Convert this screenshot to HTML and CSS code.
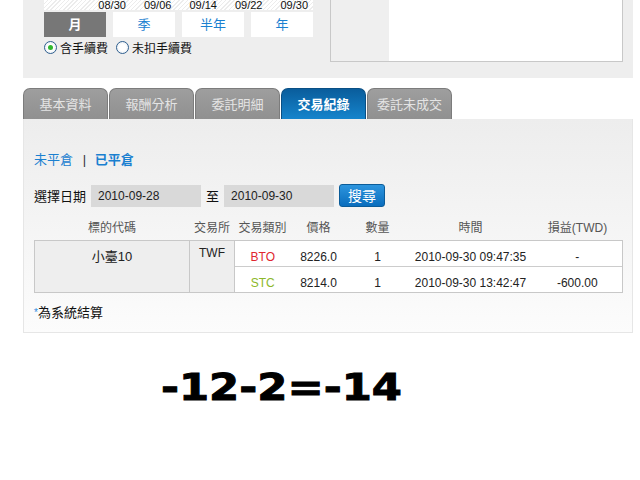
FILE: index.html
```html
<!DOCTYPE html>
<html lang="zh-Hant">
<head>
    <meta charset="UTF-8">
    <title>交易紀錄</title>
    <link rel="stylesheet" href="styles.css">
</head>
<body>
    <div class="page">
        <!-- Period / chart summary -->
        <div class="top-panel">
            <div class="period">
                <div class="axis">
                    <span>08/30</span>
                    <span>09/06</span>
                    <span>09/14</span>
                    <span>09/22</span>
                    <span>09/30</span>
                </div>
                <div class="period-btns">
                    <a class="period-btn active">月</a>
                    <a class="period-btn">季</a>
                    <a class="period-btn">半年</a>
                    <a class="period-btn">年</a>
                </div>
                <div class="fee-opts">
                    <label class="radio checked"><span class="radio-mark"></span>含手續費</label>
                    <label class="radio"><span class="radio-mark"></span>未扣手續費</label>
                </div>
            </div>
            <div class="summary-box">
                <div class="summary-side"></div>
                <div class="summary-main"></div>
            </div>
        </div>

        <!-- Tabs -->
        <ul class="tabs">
            <li class="tab">基本資料</li>
            <li class="tab">報酬分析</li>
            <li class="tab">委託明細</li>
            <li class="tab active">交易紀錄</li>
            <li class="tab">委託未成交</li>
        </ul>

        <div class="tab-panel">
            <div class="sub-nav">
                <a class="sub-link">未平倉</a>
                <span class="sep">|</span>
                <a class="sub-link current">已平倉</a>
            </div>

            <div class="date-row">
                <span class="date-label">選擇日期</span>
                <span class="date-input">2010-09-28</span>
                <span class="date-to">至</span>
                <span class="date-input">2010-09-30</span>
                <button type="button" class="search-btn">搜尋</button>
            </div>

            <table class="trades">
                <colgroup>
                    <col class="w-symbol">
                    <col class="w-exch">
                    <col class="w-type">
                    <col class="w-price">
                    <col class="w-qty">
                    <col class="w-time">
                    <col class="w-pnl">
                </colgroup>
                <thead>
                    <tr>
                        <th>標的代碼</th>
                        <th>交易所</th>
                        <th>交易類別</th>
                        <th>價格</th>
                        <th>數量</th>
                        <th>時間</th>
                        <th>損益(TWD)</th>
                    </tr>
                </thead>
                <tbody>
                    <tr>
                        <td rowspan="2" class="symbol">小臺10</td>
                        <td rowspan="2" class="exch">TWF</td>
                        <td class="buy">BTO</td>
                        <td>8226.0</td>
                        <td>1</td>
                        <td>2010-09-30 09:47:35</td>
                        <td>-</td>
                    </tr>
                    <tr class="second">
                        <td class="sell">STC</td>
                        <td>8214.0</td>
                        <td>1</td>
                        <td>2010-09-30 13:42:47</td>
                        <td>-600.00</td>
                    </tr>
                </tbody>
            </table>

            <p class="note"><span class="star">*</span>為系統結算</p>
        </div>
    </div>

    <div class="formula">-12-2=-14</div>
</body>
</html>
```

FILE: styles.css
```css
/* General Styles */
body {
    margin: 0;
    background: #ffffff;
    font-family: 'Liberation Sans', 'Noto Sans CJK TC', sans-serif;
    font-size: 12px;
    color: #222;
}

.page {
    margin-left: 23px;
    width: 610px;
}

/* Top panel */
.top-panel {
    display: flex;
    align-items: flex-start;
    height: 78px;
    background-color: #eeeeee;
    padding-left: 21px;
    box-sizing: border-box;
}

.period {
    width: 269px;
}

.axis {
    height: 10px;
    overflow: hidden;
    display: flex;
    justify-content: flex-end;
    gap: 18px;
    padding-right: 5px;
    background: repeating-linear-gradient(-45deg, #ffffff 0 2px, #ececec 2px 3px);
}

.axis span {
    display: block;
    font-size: 11px;
    line-height: 10px;
    color: #111;
}

.period-btns {
    display: flex;
    gap: 7px;
    margin-top: 2px;
}

.period-btn {
    width: 62px;
    height: 25px;
    line-height: 25px;
    text-align: center;
    background: #ffffff;
    color: #1a80d0;
    font-size: 13px;
}

.period-btn.active {
    background: #777777;
    color: #ffffff;
    font-weight: bold;
}

.fee-opts {
    display: flex;
    align-items: center;
    margin-top: 3px;
    height: 15px;
}

.radio {
    display: flex;
    align-items: center;
    margin-right: 8px;
    font-size: 12px;
    color: #111;
}

.radio-mark {
    width: 11px;
    height: 11px;
    border: 1px solid #2f5f8f;
    border-radius: 50%;
    margin-right: 3px;
    background: radial-gradient(circle, #ffffff 40%, #dde6ee 100%);
    position: relative;
}

.radio.checked .radio-mark::after {
    content: "";
    position: absolute;
    left: 3px;
    top: 3px;
    width: 5px;
    height: 5px;
    border-radius: 50%;
    background: #2fb82f;
}

.summary-box {
    display: flex;
    margin-left: 17px;
    width: 293px;
    height: 62px;
    border: 1px solid #c8c8c8;
    border-top: none;
    box-sizing: border-box;
}

.summary-side {
    width: 58px;
    background: #efefef;
}

.summary-main {
    flex: 1;
    background: #ffffff;
}

/* Tabs */
.tabs {
    display: flex;
    gap: 1px;
    list-style: none;
    margin: 10px 0 0;
    padding: 0;
}

.tab {
    width: 85px;
    height: 31px;
    line-height: 31px;
    box-sizing: border-box;
    text-align: center;
    font-size: 13px;
    color: #e4e4e4;
    background: linear-gradient(#9e9e9e, #909090);
    border: 1px solid #7c7c7c;
    border-bottom: none;
    border-radius: 7px 7px 0 0;
}

.tab.active {
    color: #ffffff;
    font-weight: bold;
    background: linear-gradient(#0a5d9c, #1584cc);
    border-color: #0a4f84;
}

/* Tab panel */
.tab-panel {
    background: linear-gradient(#ededed, #fcfcfc);
    border: 1px solid #e6e6e6;
    border-top: none;
    padding: 33px 10px 11px;
}

.sub-nav {
    line-height: 16px;
    font-size: 13px;
}

.sub-link {
    color: #1a80d0;
}

.sub-link.current {
    font-weight: bold;
}

.sep {
    color: #333;
    margin: 0 5px 0 6px;
}

.date-row {
    display: flex;
    align-items: center;
    margin-top: 16px;
    height: 23px;
}

.date-label,
.date-to {
    font-size: 13px;
    color: #111;
}

.date-input {
    width: 110px;
    height: 22px;
    line-height: 22px;
    box-sizing: border-box;
    padding-left: 7px;
    margin-left: 5px;
    background: #d9d9d9;
    color: #222;
}

.date-input + .date-to {
    margin-left: 5px;
}

.search-btn {
    margin-left: 5px;
    width: 46px;
    height: 23px;
    padding: 0;
    border: 1px solid #0b5c99;
    border-radius: 3px;
    background: linear-gradient(#2d95de, #0a6dbd);
    color: #ffffff;
    font-family: 'Liberation Sans', 'Noto Sans CJK TC', sans-serif;
    font-size: 14px;
    line-height: 20px;
}

/* Trades table */
.trades {
    margin-top: 9px;
    width: 588px;
    border-collapse: collapse;
    table-layout: fixed;
}

.w-symbol { width: 155px; }
.w-exch { width: 45px; }
.w-type { width: 56px; }
.w-price { width: 56px; }
.w-qty { width: 62px; }
.w-time { width: 124px; }
.w-pnl { width: 90px; }

.trades th {
    height: 24px;
    padding: 0;
    font-weight: normal;
    color: #555;
    line-height: 16px;
    white-space: nowrap;
}

.trades td {
    height: 16px;
    padding: 8px 0 1px;
    line-height: 16px;
    text-align: center;
    vertical-align: top;
    background: #ffffff;
    color: #222;
    border-top: 1px solid #cccccc;
    white-space: nowrap;
}

.trades tbody tr:first-child td {
    border-top: 1px solid #c8c8c8;
}

.trades td:last-child {
    border-right: 1px solid #c8c8c8;
}

.trades tr.second td {
    border-bottom: 1px solid #c8c8c8;
}

.trades td.symbol,
.trades td.exch {
    background: #eeeeee;
    border: 1px solid #c8c8c8;
}

.trades td.symbol {
    font-size: 13px;
}

.trades td.exch {
    padding-top: 4px;
}

.buy {
    color: #e0262e !important;
}

.sell {
    color: #8cb82a !important;
}

.note {
    margin: 12px 0 0;
    line-height: 16px;
    font-size: 13px;
    color: #111;
}

.star {
    color: #2a8ae0;
    font-size: 10px;
    vertical-align: top;
}

/* Result line */
.formula {
    width: fit-content;
    margin: 35px 0 0 161px;
    font-family: 'DejaVu Sans', sans-serif;
    font-weight: bold;
    font-size: 38px;
    line-height: 38px;
    color: #000;
    -webkit-text-stroke: 1px #000;
    transform: scaleX(1.14);
    transform-origin: left center;
}
```
